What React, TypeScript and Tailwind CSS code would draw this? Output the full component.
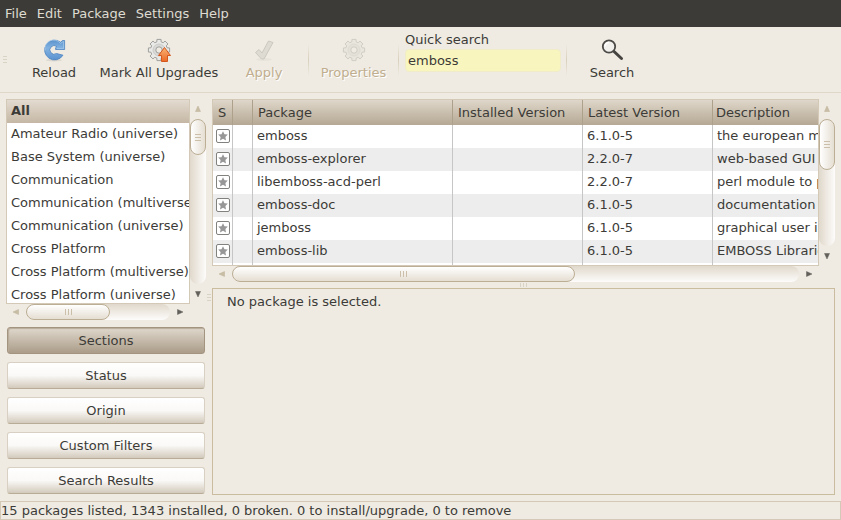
import React, { useState } from "react";
import type { ReactNode } from "react";

const menus = ["File", "Edit", "Package", "Settings", "Help"];

const sections = [
  "All",
  "Amateur Radio (universe)",
  "Base System (universe)",
  "Communication",
  "Communication (multiverse)",
  "Communication (universe)",
  "Cross Platform",
  "Cross Platform (multiverse)",
  "Cross Platform (universe)",
];

const filters = ["Sections", "Status", "Origin", "Custom Filters", "Search Results"];

const packages = [
  { name: "emboss", latest: "6.1.0-5", description: "the european molecular biology open software suite" },
  { name: "emboss-explorer", latest: "2.2.0-7", description: "web-based GUI to EMBOSS" },
  { name: "libemboss-acd-perl", latest: "2.2.0-7", description: "perl module to parse ACD files" },
  { name: "emboss-doc", latest: "6.1.0-5", description: "documentation for EMBOSS" },
  { name: "jemboss", latest: "6.1.0-5", description: "graphical user interface to EMBOSS" },
  { name: "emboss-lib", latest: "6.1.0-5", description: "EMBOSS Libraries" },
];

function ReloadIcon() {
  return (
    <svg width="24" height="24" viewBox="0 0 24 24" aria-hidden="true">
      <defs>
        <linearGradient id="reload" x1="0" y1="0" x2="0" y2="1">
          <stop offset="0" stopColor="#5b93cd" />
          <stop offset="0.4" stopColor="#82b2e1" />
          <stop offset="1" stopColor="#5a92cf" />
        </linearGradient>
      </defs>
      <ellipse cx="12" cy="22.2" rx="8" ry="1.2" fill="#dcd8cf" />
      <path
        d="M21 17.2A9.9 9.9 0 1 1 18.6 4.2L20.6 2.5H22.6V11.500H13.600V9.700L14.800 8.500A4.300 4.300 0 1 0 14.500 15.500z"
        fill="url(#reload)"
        stroke="#4b82bf"
        strokeWidth="0.8"
        strokeLinejoin="round"
      />
      <path d="M3.300 12.500A8.600 8.600 0 0 1 18.500 5.400L21.600 3.300V10.600H15" fill="none" stroke="#a4c8ea" strokeWidth="0.8" />
    </svg>
  );
}

const gearOutline = Array.from({ length: 8 }, (_, tooth) =>
  [
    [-15, 8.4],
    [-11, 10.8],
    [11, 10.8],
    [15, 8.4],
  ].map(([offset, radius]) => {
    const angle = ((tooth * 45 + offset) * Math.PI) / 180;
    return `${(12 + radius * Math.sin(angle)).toFixed(2)},${(12 - radius * Math.cos(angle)).toFixed(2)}`;
  }),
)
  .flat()
  .join(" ");

function Gear({ pale }: { pale?: boolean }) {
  return (
    <g strokeLinejoin="round">
      <polygon points={gearOutline} fill={pale ? "#e9e6dd" : "#e9e9e7"} stroke={pale ? "#d0cec4" : "#a0a09d"} />
      <circle cx="12" cy="12" r="6" fill={pale ? "#e4e1d8" : "#d9d9d7"} stroke={pale ? "#dedbd2" : "#cbcbc8"} />
      <circle cx="12" cy="12" r="3.200" fill="#efebe3" stroke={pale ? "#d0cec4" : "#a0a09d"} />
    </g>
  );
}

function UpgradeIcon() {
  return (
    <svg width="24" height="24" viewBox="0 0 24 24" aria-hidden="true">
      <defs>
        <linearGradient id="upgrade" x1="0" y1="0" x2="0" y2="1">
          <stop offset="0" stopColor="#f9b374" />
          <stop offset="1" stopColor="#ec6a27" />
        </linearGradient>
      </defs>
      <Gear />
      <path d="M17.500 9.500 23.500 17.500H20.500V23.500H14.500V17.500H11.500z" fill="url(#upgrade)" stroke="#d4571f" strokeLinejoin="round" />
    </svg>
  );
}

function ApplyIcon() {
  return (
    <svg width="24" height="24" viewBox="0 0 24 24" aria-hidden="true">
      <ellipse cx="12" cy="21.500" rx="8" ry="1.500" fill="#e7e3da" />
      <path
        d="M3.500 14.500 7 11.500l3 3.500 6.500-12 4.500 1.500L12 21h-2.500z"
        fill="#dedbd2"
        stroke="#cbc9bf"
        strokeLinejoin="round"
      />
    </svg>
  );
}

function PropertiesIcon() {
  return (
    <svg width="24" height="24" viewBox="0 0 24 24" aria-hidden="true">
      <Gear pale />
    </svg>
  );
}

function SearchIcon() {
  return (
    <svg width="24" height="24" viewBox="0 0 24 24" aria-hidden="true">
      <path d="M13.500 13 21.500 20.500" stroke="#454441" strokeWidth="3" strokeLinecap="round" />
      <circle cx="9" cy="8.500" r="6.200" fill="#f2f0ec" stroke="#4b4a47" strokeWidth="1.800" />
      <path d="M5 8.500a4 4 0 0 1 4-4" fill="none" stroke="#fff" strokeWidth="1.400" />
    </svg>
  );
}

function StatusIcon() {
  return (
    <svg width="14" height="14" viewBox="0 0 14 14" role="img" aria-label="Not installed" className="block">
      <rect x="0.500" y="0.500" width="13" height="13" rx="1.500" fill="#fff" stroke="#81817e" />
      <path d="M7 2.200 8.500 5.200 11.800 5.600 9.400 8 10 11.500 7 9.800 4 11.500 4.600 8 2.200 5.600 5.500 5.200z" fill="#979797" />
    </svg>
  );
}

type Direction = "up" | "down" | "left" | "right";

const triangles: Record<Direction, string> = {
  up: "M3 0 5.500 5.500h-5z",
  down: "M3 6 5.500 .5h-5z",
  left: "M0 3 5.500 .5v5z",
  right: "M6 3 .5 .5v5z",
};

function Arrow({ direction, enabled }: { direction: Direction; enabled?: boolean }) {
  const vertical = direction === "up" || direction === "down";
  return (
    <button
      type="button"
      aria-label={`Scroll ${direction}`}
      disabled={!enabled}
      className={`flex shrink-0 items-center justify-center ${vertical ? "h-5 w-4" : "h-4 w-5"}`}
    >
      <svg width="6" height="6" viewBox="0 0 6 6">
        <path
          d={triangles[direction]}
          fill={enabled ? "#62605b" : "#c9bda6"}
          stroke={enabled ? "#62605b" : "#bdb097"}
          strokeWidth="0.500"
        />
      </svg>
    </button>
  );
}

function Grip({ vertical }: { vertical?: boolean }) {
  return (
    <span className={`flex gap-[2px] ${vertical ? "flex-col" : "flex-row"}`} aria-hidden="true">
      {[0, 1, 2].map((i) => (
        <span key={i} className={`bg-[#cbbfaa] ${vertical ? "h-px w-[6px]" : "h-[6px] w-px"}`} />
      ))}
    </span>
  );
}

function VerticalScrollbar({ thumb }: { thumb: string }) {
  return (
    <div className="flex w-4 shrink-0 flex-col">
      <Arrow direction="up" />
      <div className="flex-1 rounded-lg bg-linear-to-r from-[#e0d8cb] to-[#fdfcfb]">
        <div
          className={`flex w-4 items-center justify-center rounded-lg border border-[#bcae94] bg-linear-to-r from-white to-[#e5ded2] ${thumb}`}
        >
          <Grip vertical />
        </div>
      </div>
      <Arrow direction="down" enabled />
    </div>
  );
}

function HorizontalScrollbar({ thumb }: { thumb: string }) {
  return (
    <div className="mr-4 flex h-4 shrink-0">
      <Arrow direction="left" />
      <div className="flex-1 rounded-lg bg-linear-to-b from-[#e0d8cb] to-[#fdfcfb]">
        <div
          className={`flex h-4 items-center justify-center rounded-lg border border-[#bcae94] bg-linear-to-b from-white to-[#e5ded2] ${thumb}`}
        >
          <Grip />
        </div>
      </div>
      <Arrow direction="right" enabled />
    </div>
  );
}

function ToolButton({
  icon,
  label,
  width,
  disabled,
}: {
  icon: ReactNode;
  label: string;
  width: string;
  disabled?: boolean;
}) {
  return (
    <button
      type="button"
      disabled={disabled}
      className={`flex shrink-0 flex-col items-center gap-[3px] whitespace-nowrap ${width} ${
        disabled ? "text-[#c0ae8f] [text-shadow:1px_1px_0_#fff]" : ""
      }`}
    >
      {icon}
      <span className="leading-4">{label}</span>
    </button>
  );
}

function Separator() {
  return <div className="h-8 w-px shrink-0 bg-linear-to-b from-[#efebe3] via-[#d9d0bd] to-[#efebe3]" />;
}

export default function App() {
  const [query, setQuery] = useState("emboss");
  const [filter, setFilter] = useState("Sections");
  const [section, setSection] = useState("All");

  return (
    <div className="flex h-screen flex-col overflow-hidden bg-[#efebe3] font-['DejaVu_Sans',sans-serif] text-[13px] leading-4 text-[#3c3b37]">
      <nav className="flex h-[27px] shrink-0 items-center bg-[#3c3b37] text-[#dfdbd2]">
        {menus.map((menu) => (
          <button key={menu} type="button" className="px-[5px]">
            {menu}
          </button>
        ))}
      </nav>

      <div className="flex h-[66px] shrink-0 items-center border-b border-[#dfd8c8]" role="toolbar">
        <div className="ml-[3px] mr-3 flex w-1 flex-col gap-[2px]">
          <span className="h-px bg-[#d9d3c6]" />
          <span className="h-px bg-[#d9d3c6]" />
          <span className="h-px bg-[#d9d3c6]" />
        </div>
        <ToolButton icon={<ReloadIcon />} label="Reload" width="w-[70px]" />
        <ToolButton icon={<UpgradeIcon />} label="Mark All Upgrades" width="w-[140px]" />
        <ToolButton icon={<ApplyIcon />} label="Apply" width="w-[70px] mr-[9px]" disabled />
        <Separator />
        <ToolButton icon={<PropertiesIcon />} label="Properties" width="w-[89px]" disabled />
        <Separator />
        <div className="ml-[6px] mr-[5px] flex w-[156px] shrink-0 flex-col gap-px self-start pt-[5px]">
          <label htmlFor="quick-search">Quick search</label>
          <input
            id="quick-search"
            type="text"
            value={query}
            onChange={(event) => setQuery(event.target.value)}
            className="h-[23px] w-full rounded-sm border border-[#f0ecc9] bg-[#f8f6be] px-[2px] outline-none"
          />
        </div>
        <Separator />
        <ToolButton icon={<SearchIcon />} label="Search" width="w-[90px]" />
      </div>

      <main className="flex min-h-0 flex-1 p-[6px]">
        <div className="flex w-[200px] shrink-0 flex-col pb-px">
          <div className="flex min-h-0 flex-1">
            <ul className="min-w-0 flex-1 overflow-hidden border border-[#d3c9b6] bg-white">
              {sections.map((name) => (
                <li key={name}>
                  <button
                    type="button"
                    onClick={() => setSection(name)}
                    className={`block h-[23px] w-full whitespace-nowrap pb-px pl-1 text-left ${
                      name === section ? "bg-linear-to-b from-[#e3dbd0] to-[#c5b7a4] font-bold" : ""
                    }`}
                  >
                    {name}
                  </button>
                </li>
              ))}
            </ul>
            <VerticalScrollbar thumb="h-9" />
          </div>
          <HorizontalScrollbar thumb="w-[84px]" />
          <div className="mt-[7px] flex shrink-0 flex-col gap-2 px-px">
            {filters.map((name) => (
              <button
                key={name}
                type="button"
                aria-pressed={name === filter}
                onClick={() => setFilter(name)}
                className={`h-[27px] rounded-[3px] border ${
                  name === filter
                    ? "border-[#a39480] bg-linear-to-b from-[#e0d8cd] to-[#aa9c88] shadow-[inset_1px_1px_1px_#b9ab98]"
                    : "border-[#d8d0c2] border-b-[#b9ac97] bg-linear-to-b from-white via-[#faf9f7] to-[#d3cabc]"
                }`}
              >
                {name}
              </button>
            ))}
          </div>
        </div>

        <div className="flex w-[6px] shrink-0 flex-col items-center pt-[195px]">
          <span className="flex w-1 flex-col gap-[2px]">
            <span className="h-px bg-[#d9d3c6]" />
            <span className="h-px bg-[#d9d3c6]" />
            <span className="h-px bg-[#d9d3c6]" />
          </span>
        </div>

        <div className="flex min-w-0 flex-1 flex-col">
          <div className="flex h-[167px] shrink-0">
            <div className="min-w-0 flex-1 overflow-hidden border border-[#d3c9b6] bg-white">
              <table className="w-full table-fixed border-separate border-spacing-0 whitespace-nowrap text-left">
                <colgroup>
                  <col className="w-5" />
                  <col className="w-5" />
                  <col className="w-[200px]" />
                  <col className="w-[130px]" />
                  <col className="w-[130px]" />
                  <col />
                </colgroup>
                <thead>
                  <tr className="h-[25px] bg-linear-to-b from-[#dfd7ca] to-[#b5a894] [&>th]:border-r [&>th]:border-[#aea18c] [&>th]:p-0 [&>th]:pl-[5px] [&>th]:font-normal [&>th:last-child]:border-r-0 [&>th:last-child]:pl-[3px]">
                    <th scope="col">S</th>
                    <th aria-label="Supported" />
                    <th scope="col">Package</th>
                    <th scope="col">Installed Version</th>
                    <th scope="col">Latest Version</th>
                    <th scope="col">Description</th>
                  </tr>
                </thead>
                <tbody className="[&_td]:border-r [&_td]:border-[#c6c6c6] [&_td]:p-0 [&_td]:pb-px [&_td]:pl-1 [&_td:first-child]:pl-[3px] [&_td:last-child]:border-r-0">
                  {packages.map((item) => (
                    <tr key={item.name} className="h-[23px] even:bg-[#ededed]">
                      <td>
                        <StatusIcon />
                      </td>
                      <td />
                      <td>{item.name}</td>
                      <td />
                      <td>{item.latest}</td>
                      <td className="overflow-hidden">{item.description}</td>
                    </tr>
                  ))}
                  <tr className="h-[23px]">
                    <td />
                    <td />
                    <td />
                    <td />
                    <td />
                    <td />
                  </tr>
                </tbody>
              </table>
            </div>
            <VerticalScrollbar thumb="h-[51px]" />
          </div>
          <HorizontalScrollbar thumb="w-[343px]" />
          <div className="flex h-[6px] shrink-0 items-center justify-center gap-[2px]">
            <span className="h-1 w-px bg-[#d9d3c6]" />
            <span className="h-1 w-px bg-[#d9d3c6]" />
            <span className="h-1 w-px bg-[#d9d3c6]" />
          </div>
          <section className="min-h-0 flex-1 border border-[#cabd9f] px-[14px] py-[5px]">No package is selected.</section>
        </div>
      </main>

      <footer className="h-[19px] shrink-0 whitespace-nowrap border border-[#d3c9b6] leading-[17px]">
        15 packages listed, 1343 installed, 0 broken. 0 to install/upgrade, 0 to remove
      </footer>
    </div>
  );
}
